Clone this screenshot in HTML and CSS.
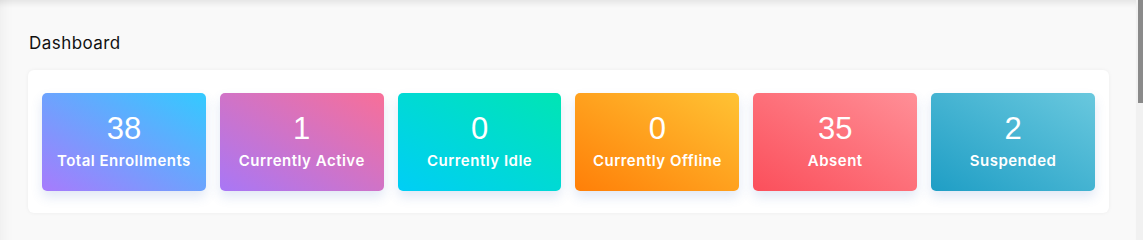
FILE: index.html
```html
<!DOCTYPE html>
<html lang="en">
<head>
<meta charset="utf-8">
<title>Dashboard</title>
<link rel="stylesheet" href="styles.css">
</head>
<body>
<div class="layout">
  <main class="content">
    <h1 class="page-title">Dashboard</h1>
    <section class="panel">
      <div class="tile tile-enrolled">
        <div class="tile-value">38</div>
        <div class="tile-label">Total Enrollments</div>
      </div>
      <div class="tile tile-active">
        <div class="tile-value">1</div>
        <div class="tile-label">Currently Active</div>
      </div>
      <div class="tile tile-idle">
        <div class="tile-value">0</div>
        <div class="tile-label">Currently Idle</div>
      </div>
      <div class="tile tile-offline">
        <div class="tile-value">0</div>
        <div class="tile-label">Currently Offline</div>
      </div>
      <div class="tile tile-absent">
        <div class="tile-value">35</div>
        <div class="tile-label">Absent</div>
      </div>
      <div class="tile tile-suspended">
        <div class="tile-value">2</div>
        <div class="tile-label">Suspended</div>
      </div>
    </section>
  </main>
  <aside class="scrollbar"><div class="scroll-thumb"></div></aside>
</div>
</body>
</html>
```
FILE: styles.css
```css
html, body {
  margin: 0;
  padding: 0;
  height: 100%;
  overflow: hidden;
}
body {
  font-family: "Inter", "Liberation Sans", sans-serif;
  background: #f9f9f9;
}
.layout {
  display: flex;
  height: 100%;
}
.content {
  flex: 1;
  background: #f9f9f9;
  padding: 33px 27px 0 28px;
  box-shadow: inset 0 7px 6px -4px rgba(0, 0, 0, 0.09), inset 16px 0 14px -14px rgba(0, 0, 0, 0.05);
}
.page-title {
  margin: 0 0 17px 1px;
  font-size: 17px;
  line-height: 20px;
  font-weight: 400;
  color: #111;
  letter-spacing: 0.45px;
}
.panel {
  display: flex;
  gap: 14px;
  background: #fff;
  border-radius: 6px;
  padding: 23px 14px 22px;
  box-shadow: 0 0 4px rgba(0, 0, 0, 0.05);
}
.tile {
  flex: 1;
  height: 98px;
  border-radius: 5px;
  display: flex;
  flex-direction: column;
  align-items: center;
  justify-content: center;
  color: #fff;
  box-shadow: 0 6px 12px rgba(70, 110, 190, 0.16);
  padding-bottom: 3px;
  box-sizing: border-box;
}
.tile-value {
  font-family: "Liberation Sans", Arial, sans-serif;
  font-size: 31px;
  line-height: 36px;
}
.tile-label {
  margin-top: 5px;
  font-size: 15px;
  line-height: 18px;
  font-weight: 600;
  letter-spacing: 0.5px;
}
.tile-enrolled { background: linear-gradient(to top right, #a77bfc, #33caff); }
.tile-active { background: linear-gradient(to top right, #a877f6, #f86f98); }
.tile-idle { background: linear-gradient(to top right, #00cef6, #00e5b4); }
.tile-offline { background: linear-gradient(to top right, #ff7f08, #ffc334); }
.tile-absent { background: linear-gradient(to top right, #fb4f5b, #ff8f97); }
.tile-suspended { background: linear-gradient(to top right, #1f9ec5, #69c8de); }
.scrollbar {
  width: 7px;
  background: #f1f1f1;
  display: flex;
  justify-content: flex-end;
}
.scroll-thumb {
  width: 5px;
  height: 103px;
  background: #8a8a8a;
}
```
